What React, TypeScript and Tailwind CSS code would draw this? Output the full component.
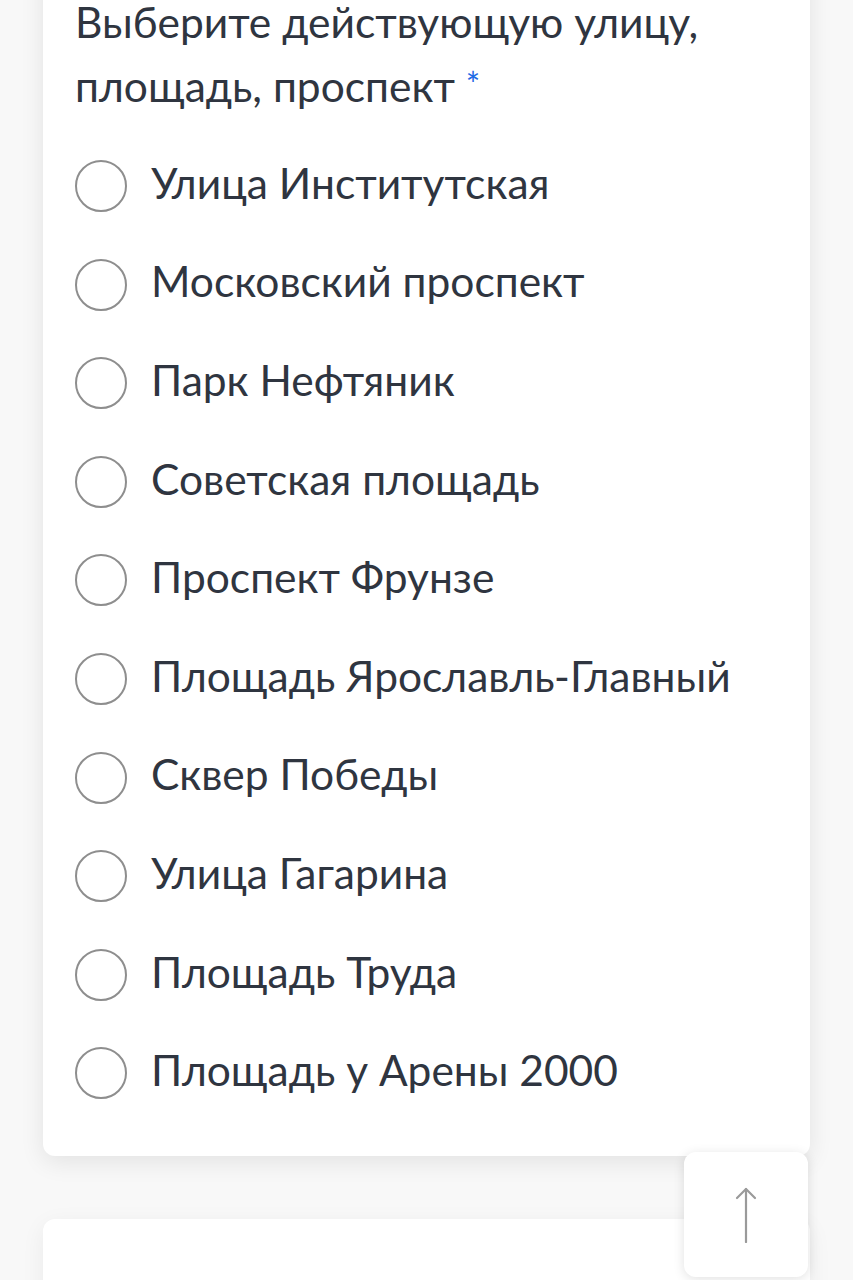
import { useState } from "react";

const streets = [
  "Улица Институтская",
  "Московский проспект",
  "Парк Нефтяник",
  "Советская площадь",
  "Проспект Фрунзе",
  "Площадь Ярославль-Главный",
  "Сквер Победы",
  "Улица Гагарина",
  "Площадь Труда",
  "Площадь у Арены 2000",
];

const RadioRow = ({ label, checked, onSelect }: { label: string; checked: boolean; onSelect: () => void }) => (
  <label className="flex h-[52px] cursor-pointer items-center gap-6" onClick={onSelect}>
    <span className="flex h-[52px] w-[52px] shrink-0 items-center justify-center rounded-full border-[2.5px] border-[#8e8e8e] bg-white">
      {checked && <span className="h-[26px] w-[26px] rounded-full bg-[#1d6ae5]" />}
    </span>
    <span className="pb-1.5 text-[42.5px] leading-none whitespace-nowrap text-[#2f3540]">{label}</span>
  </label>
);

const App = () => {
  const [selected, setSelected] = useState<number | null>(null);

  return (
    <div className="h-[1280px] overflow-hidden bg-[#f8f8f8] px-[43px] font-['Lato','Noto_Sans',sans-serif]">
      <div className="-mt-8 rounded-b-xl bg-white pt-[21.5px] pr-6 pb-[57px] pl-8 shadow-[0_6px_24px_rgba(0,0,0,0.09)]">
        <div className="text-[42.5px] leading-[64px] text-[#2f3540]">
          Выберите действующую улицу, площадь, проспект{" "}
          <span className="align-top text-[34px] leading-[60px] text-[#1d6ae5]">*</span>
        </div>
        <div className="mt-[42.5px] flex flex-col gap-[46.6px]">
          {streets.map((s, i) => (
            <RadioRow key={s} label={s} checked={selected === i} onSelect={() => setSelected(i)} />
          ))}
        </div>
      </div>

      <div className="mt-[63px] h-[120px] rounded-t-xl bg-white shadow-[0_6px_24px_rgba(0,0,0,0.06)]" />

      <button className="fixed right-[45px] bottom-[3px] flex h-[125px] w-[124px] items-center justify-center rounded-xl bg-white shadow-[0_2px_12px_rgba(0,0,0,0.12)]">
        <svg width="24" height="56" viewBox="0 0 24 56" fill="none" stroke="#9a9a9a" strokeWidth="2.2" strokeLinecap="round" strokeLinejoin="round">
          <path d="M12 2v53" />
          <path d="M3 11l9-9 9 9" />
        </svg>
      </button>
    </div>
  );
};

export default App;
